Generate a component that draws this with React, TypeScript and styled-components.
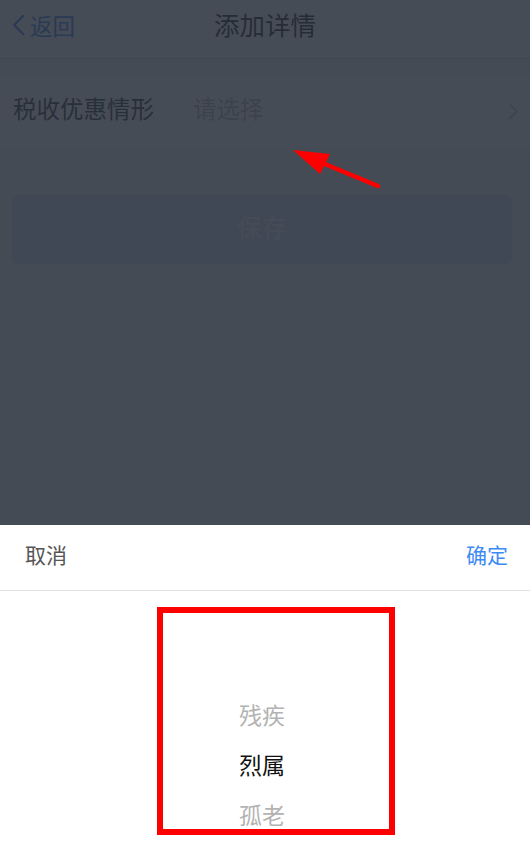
import React from 'react';
import styled, { createGlobalStyle } from 'styled-components';

const GlobalStyle = createGlobalStyle`
  html, body {
    margin: 0;
    padding: 0;
    background: #f4f4f4;
  }
  body {
    font-family: "Noto Sans CJK SC", "Noto Sans", sans-serif;
  }
  * { box-sizing: border-box; }
`;

const Screen = styled.div`
  position: relative;
  width: 530px;
  height: 858px;
  overflow: hidden;
  background: #f4f4f4;
`;

const NavBar = styled.div`
  height: 59px;
  display: flex;
  align-items: center;
  justify-content: center;
  position: relative;
  background: #fbfbfb;
  border-bottom: 1px solid #d6d6d6;
`;

const BackLink = styled.div`
  position: absolute;
  left: 12px;
  top: 0;
  height: 50px;
  display: flex;
  align-items: center;
  gap: 5px;
  color: #3b7ff0;
  font-size: 22.5px;
`;

const Title = styled.div`
  font-size: 25.5px;
  color: #222;
  margin-top: -11px;
`;

const FormRow = styled.div`
  margin-top: 17px;
  height: 71px;
  display: flex;
  align-items: center;
  padding: 0 11px 0 13px;
  background: #ffffff;
`;

const Label = styled.span`
  font-size: 23.5px;
  color: #333;
  width: 180px;
  margin-top: -7px;
`;

const Placeholder = styled.span`
  flex: 1;
  font-size: 23.5px;
  color: #b5b5b5;
  margin-top: -7px;
`;

const SaveButton = styled.div`
  margin: 48px 18px 0 12px;
  height: 69px;
  border-radius: 6px;
  background: #d2e3fb;
  color: #ffffff;
  font-size: 25px;
  display: flex;
  align-items: center;
  justify-content: center;
  padding-bottom: 7px;
`;

const Mask = styled.div`
  position: absolute;
  inset: 0;
  background: rgba(40, 46, 58, 0.86);
`;

const Sheet = styled.div`
  position: absolute;
  left: 0;
  right: 0;
  bottom: 0;
  height: 333px;
  background: #ffffff;
  display: flex;
  flex-direction: column;
`;

const Toolbar = styled.div`
  height: 66px;
  display: flex;
  align-items: center;
  justify-content: space-between;
  padding: 0 22px 8px 25px;
  border-bottom: 1px solid #e3e3e3;
`;

const ToolButton = styled.span<{ $primary?: boolean }>`
  font-size: 21px;
  color: ${({ $primary }) => ($primary ? '#3d8af5' : '#555555')};
`;

const Wheel = styled.div`
  flex: 1;
  display: flex;
  flex-direction: column;
  align-items: center;
  padding-top: 98px;
`;

const WheelItem = styled.div<{ $active?: boolean }>`
  height: 50px;
  display: flex;
  align-items: center;
  padding-right: 6px;
  font-size: 23px;
  color: ${({ $active }) => ($active ? '#111111' : '#b3b3b3')};
`;

const Highlight = styled.div`
  position: absolute;
  left: 157px;
  top: 607px;
  width: 238px;
  height: 228px;
  border: 6px solid #ff0000;
`;

const Pointer = styled.svg`
  position: absolute;
  left: 280px;
  top: 138px;
`;

const Chevron = ({ dir, color, w, h }: { dir: 'left' | 'right'; color: string; w: number; h: number }) => (
  <svg width={w} height={h} viewBox="0 0 12 20" style={{ flexShrink: 0 }}>
    <path
      d={dir === 'left' ? 'M10.5 1.5 L2 10 L10.5 18.5' : 'M1.5 1.5 L10 10 L1.5 18.5'}
      fill="none"
      stroke={color}
      strokeWidth="2"
      strokeLinecap="round"
      strokeLinejoin="round"
    />
  </svg>
);

export default function App() {
  return (
    <Screen>
      <GlobalStyle />
      <NavBar>
        <BackLink>
          <Chevron dir="left" color="#3b7ff0" w={13} h={22} />
          <span>返回</span>
        </BackLink>
        <Title>添加详情</Title>
      </NavBar>
      <FormRow>
        <Label>税收优惠情形</Label>
        <Placeholder>请选择</Placeholder>
        <Chevron dir="right" color="#c4c4c4" w={11} h={17} />
      </FormRow>
      <SaveButton>保存</SaveButton>

      <Mask />

      <Pointer width="110" height="60" viewBox="0 0 110 60">
        <line x1="98" y1="48" x2="40" y2="24" stroke="#ff0000" strokeWidth="4.5" strokeLinecap="round" />
        <polygon points="13,12 50,16 40,36" fill="#ff0000" />
      </Pointer>

      <Sheet>
        <Toolbar>
          <ToolButton>取消</ToolButton>
          <ToolButton $primary>确定</ToolButton>
        </Toolbar>
        <Wheel>
          <WheelItem>残疾</WheelItem>
          <WheelItem $active>烈属</WheelItem>
          <WheelItem>孤老</WheelItem>
        </Wheel>
      </Sheet>

      <Highlight />
    </Screen>
  );
}
